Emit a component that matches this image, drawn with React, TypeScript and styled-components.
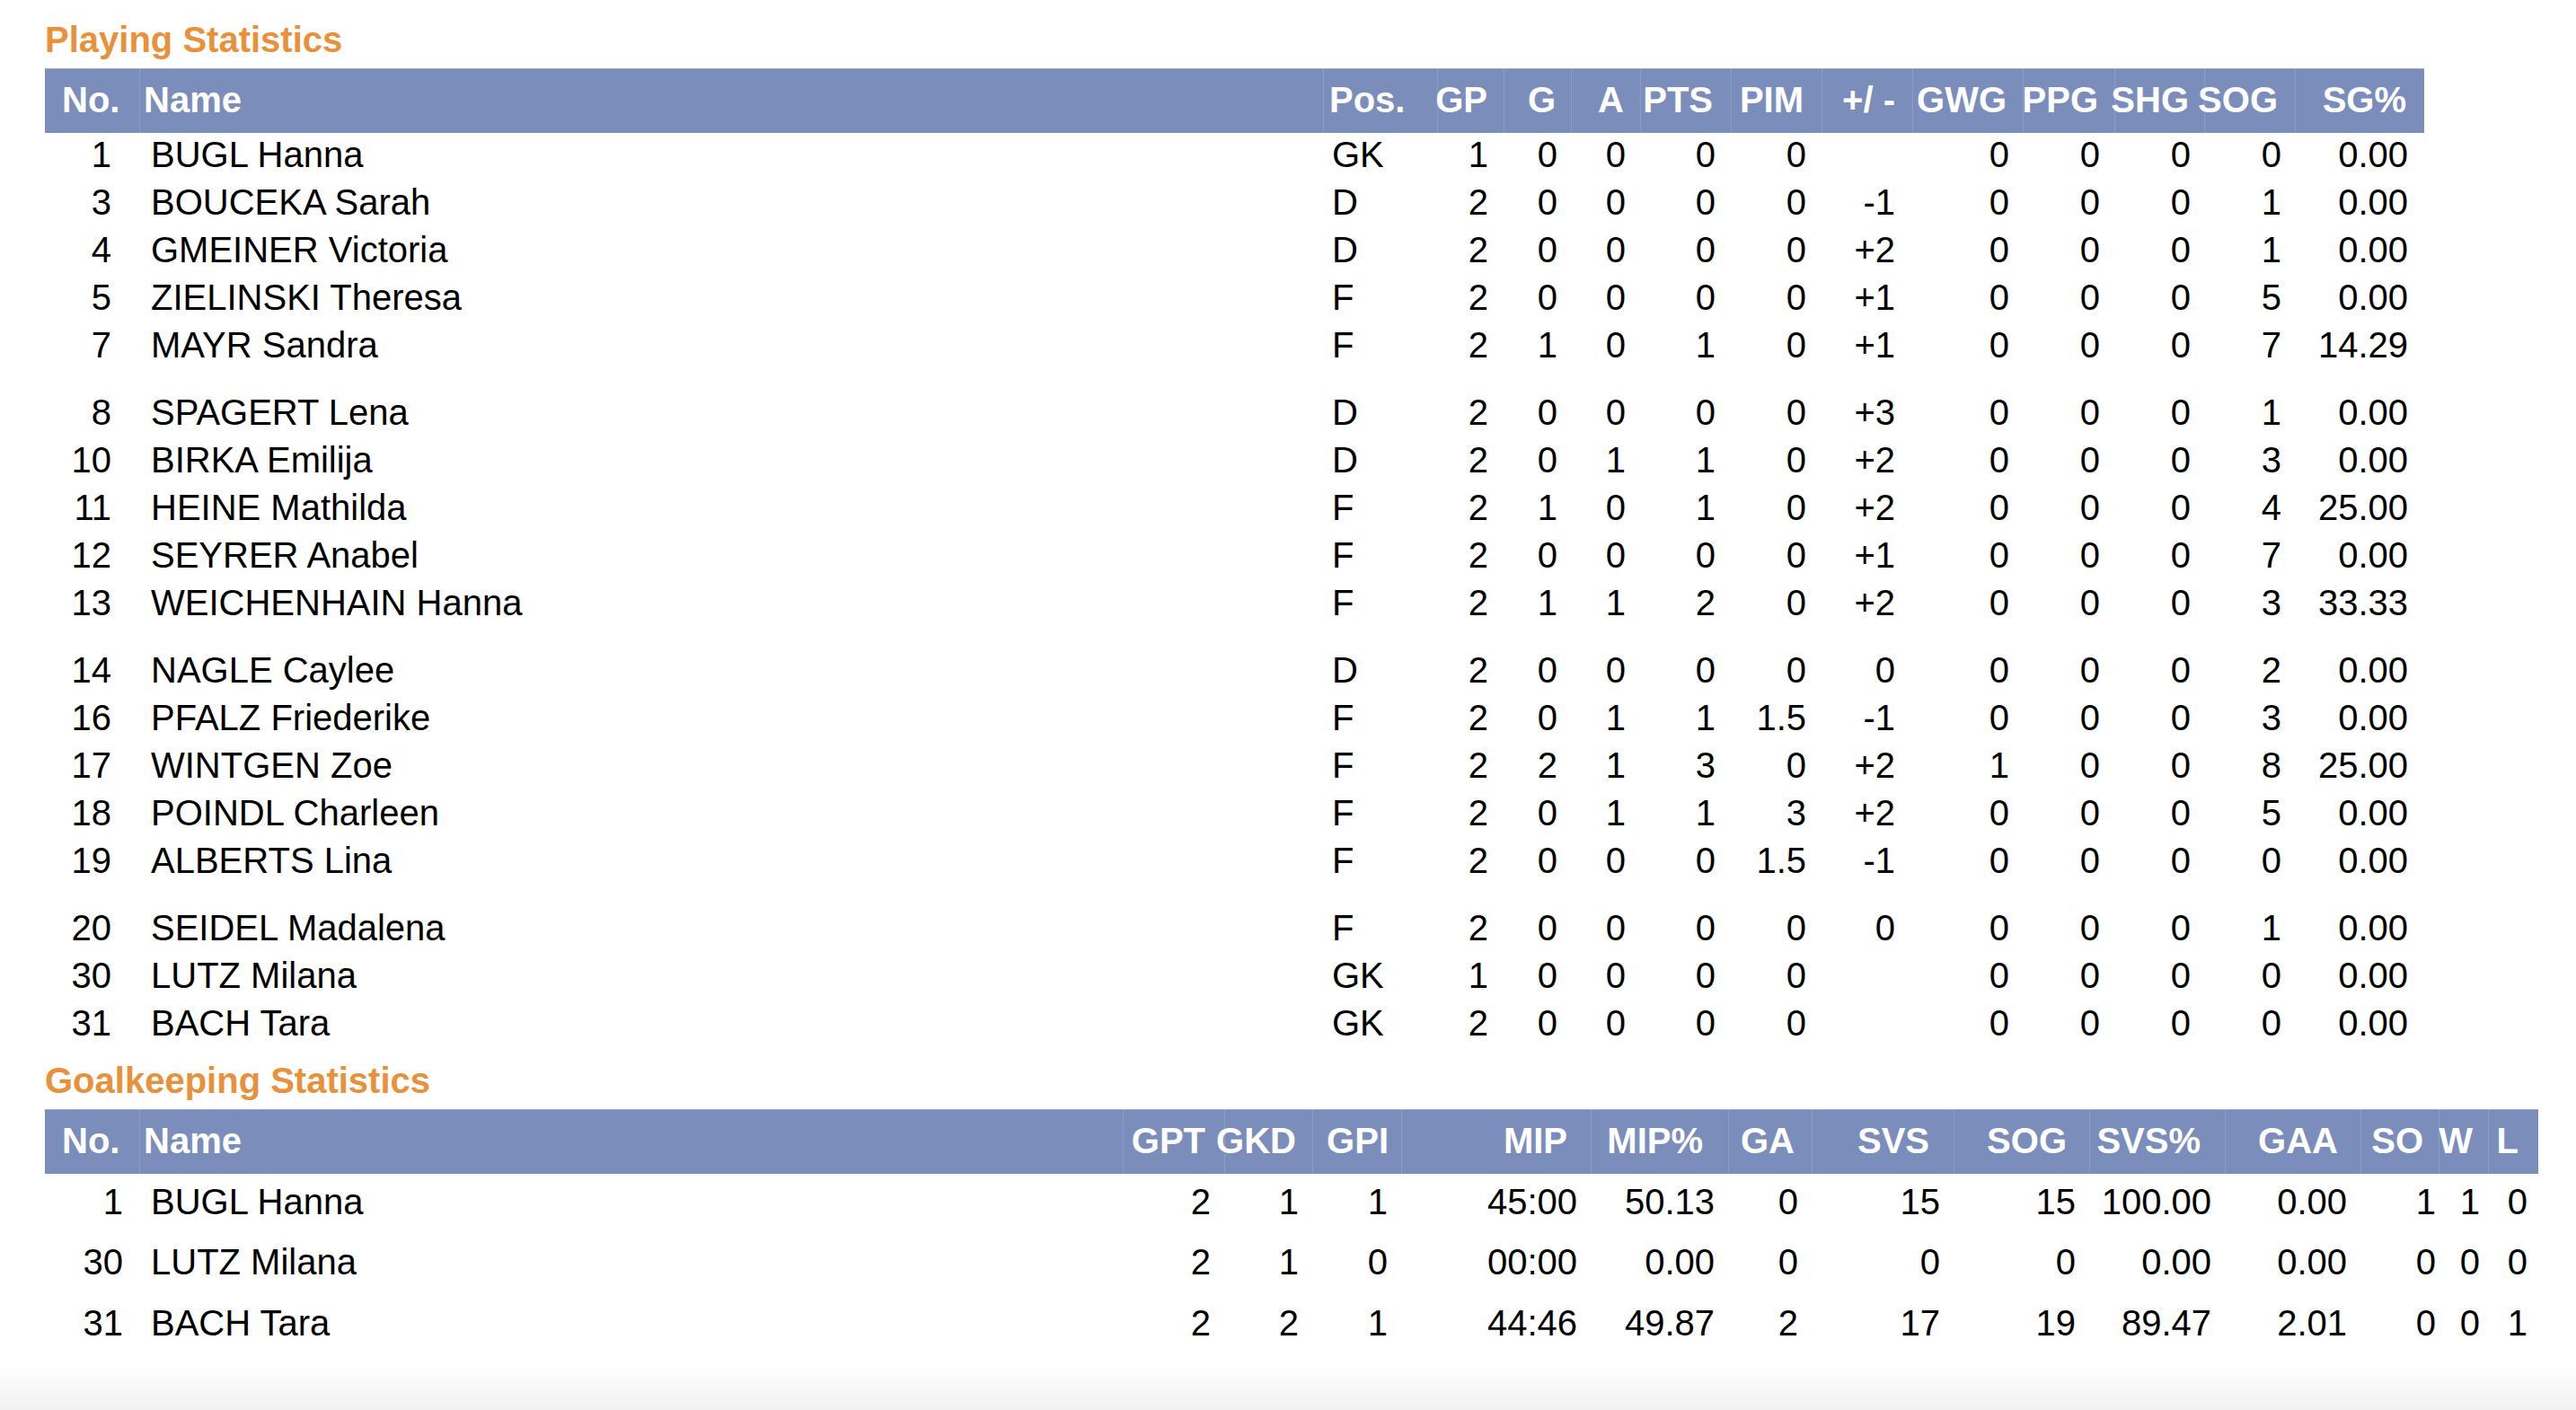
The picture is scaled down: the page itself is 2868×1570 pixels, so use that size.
import styled, { createGlobalStyle } from "styled-components";

type Align = "left" | "right";

interface Column {
  label: string;
  w: number;
  align: Align;
  pad: number; // data padding on aligned side
  hpad: number; // header padding on aligned side
  halign?: Align;
}

const GlobalStyle = createGlobalStyle`
  html {
    height: 100%;
  }
  body {
    margin: 0;
    min-height: 100%;
    font-family: "Liberation Sans", Arial, Helvetica, sans-serif;
    color: #000;
    background: linear-gradient(to bottom, #ffffff calc(100% - 50px), #f1f1f1 100%);
  }
`;

const Page = styled.div`
  padding: 21px 0 0 50px;
`;

const Heading = styled.h2<{ $gap?: number }>`
  margin: ${(p) => p.$gap ?? 0}px 0 9px;
  font-size: 40px;
  line-height: 46px;
  font-weight: 700;
  color: #e8913a;
`;

const Table = styled.div`
  display: flex;
  flex-direction: column;
  width: fit-content;
`;

const Group = styled.div`
  display: flex;
  flex-direction: column;
  & + & {
    margin-top: 22px;
  }
`;

const HeadRow = styled.div<{ $cols: string }>`
  display: grid;
  grid-template-columns: ${(p) => p.$cols};
  height: 72px;
  background: #7b8dbb;
  box-shadow: inset 0 1px 0 rgba(255, 255, 255, 0.25);
`;

const Row = styled.div<{ $cols: string; $h: number }>`
  display: grid;
  grid-template-columns: ${(p) => p.$cols};
  height: ${(p) => p.$h}px;
`;

const Cell = styled.div<{ $align: Align; $pad: number }>`
  display: flex;
  align-items: center;
  justify-content: ${(p) => (p.$align === "right" ? "flex-end" : "flex-start")};
  padding: ${(p) =>
    p.$align === "right" ? `0 ${p.$pad}px 5px 0` : `0 0 5px ${p.$pad}px`};
  font-size: 40px;
  white-space: nowrap;
  min-width: 0;
`;

const HeadCell = styled(Cell)`
  font-weight: 700;
  color: #fff;
  padding-bottom: 1px;
  & + & {
    border-left: 1px solid rgba(255, 255, 255, 0.14);
  }
`;

const playingCols: Column[] = [
  { label: "No.", w: 105, align: "right", pad: 31, hpad: 19, halign: "left" },
  { label: "Name", w: 1318, align: "left", pad: 13, hpad: 4 },
  { label: "Pos.", w: 127, align: "left", pad: 10, hpad: 6 },
  { label: "GP", w: 74, align: "right", pad: 17, hpad: 18 },
  { label: "G", w: 75, align: "right", pad: 15, hpad: 17 },
  { label: "A", w: 77, align: "right", pad: 16, hpad: 18 },
  { label: "PTS", w: 101, align: "right", pad: 17, hpad: 20 },
  { label: "PIM", w: 101, align: "right", pad: 17, hpad: 20 },
  { label: "+/ -", w: 101, align: "right", pad: 19, hpad: 19 },
  { label: "GWG", w: 123, align: "right", pad: 15, hpad: 18 },
  { label: "PPG", w: 102, align: "right", pad: 16, hpad: 18 },
  { label: "SHG", w: 100, align: "right", pad: 15, hpad: 17 },
  { label: "SOG", w: 101, align: "right", pad: 15, hpad: 19 },
  { label: "SG%", w: 144, align: "right", pad: 18, hpad: 20 },
];

const keeperCols: Column[] = [
  { label: "No.", w: 105, align: "right", pad: 18, hpad: 19, halign: "left" },
  { label: "Name", w: 1095, align: "left", pad: 13, hpad: 4 },
  { label: "GPT", w: 113, align: "right", pad: 15, hpad: 21 },
  { label: "GKD", w: 98, align: "right", pad: 15, hpad: 18 },
  { label: "GPI", w: 99, align: "right", pad: 15, hpad: 14 },
  { label: "MIP", w: 211, align: "right", pad: 15, hpad: 26 },
  { label: "MIP%", w: 153, align: "right", pad: 15, hpad: 28 },
  { label: "GA", w: 93, align: "right", pad: 15, hpad: 19 },
  { label: "SVS", w: 158, align: "right", pad: 15, hpad: 27 },
  { label: "SOG", w: 151, align: "right", pad: 15, hpad: 25 },
  { label: "SVS%", w: 151, align: "right", pad: 15, hpad: 27 },
  { label: "GAA", w: 151, align: "right", pad: 15, hpad: 25 },
  { label: "SO", w: 87, align: "right", pad: 3, hpad: 17 },
  { label: "W", w: 55, align: "right", pad: 9, hpad: 17 },
  { label: "L", w: 56, align: "right", pad: 12, hpad: 22 },
];

const players: string[][] = [
  ["1", "BUGL Hanna", "GK", "1", "0", "0", "0", "0", "", "0", "0", "0", "0", "0.00"],
  ["3", "BOUCEKA Sarah", "D", "2", "0", "0", "0", "0", "-1", "0", "0", "0", "1", "0.00"],
  ["4", "GMEINER Victoria", "D", "2", "0", "0", "0", "0", "+2", "0", "0", "0", "1", "0.00"],
  ["5", "ZIELINSKI Theresa", "F", "2", "0", "0", "0", "0", "+1", "0", "0", "0", "5", "0.00"],
  ["7", "MAYR Sandra", "F", "2", "1", "0", "1", "0", "+1", "0", "0", "0", "7", "14.29"],
  ["8", "SPAGERT Lena", "D", "2", "0", "0", "0", "0", "+3", "0", "0", "0", "1", "0.00"],
  ["10", "BIRKA Emilija", "D", "2", "0", "1", "1", "0", "+2", "0", "0", "0", "3", "0.00"],
  ["11", "HEINE Mathilda", "F", "2", "1", "0", "1", "0", "+2", "0", "0", "0", "4", "25.00"],
  ["12", "SEYRER Anabel", "F", "2", "0", "0", "0", "0", "+1", "0", "0", "0", "7", "0.00"],
  ["13", "WEICHENHAIN Hanna", "F", "2", "1", "1", "2", "0", "+2", "0", "0", "0", "3", "33.33"],
  ["14", "NAGLE Caylee", "D", "2", "0", "0", "0", "0", "0", "0", "0", "0", "2", "0.00"],
  ["16", "PFALZ Friederike", "F", "2", "0", "1", "1", "1.5", "-1", "0", "0", "0", "3", "0.00"],
  ["17", "WINTGEN Zoe", "F", "2", "2", "1", "3", "0", "+2", "1", "0", "0", "8", "25.00"],
  ["18", "POINDL Charleen", "F", "2", "0", "1", "1", "3", "+2", "0", "0", "0", "5", "0.00"],
  ["19", "ALBERTS Lina", "F", "2", "0", "0", "0", "1.5", "-1", "0", "0", "0", "0", "0.00"],
  ["20", "SEIDEL Madalena", "F", "2", "0", "0", "0", "0", "0", "0", "0", "0", "1", "0.00"],
  ["30", "LUTZ Milana", "GK", "1", "0", "0", "0", "0", "", "0", "0", "0", "0", "0.00"],
  ["31", "BACH Tara", "GK", "2", "0", "0", "0", "0", "", "0", "0", "0", "0", "0.00"],
];

const keepers: string[][] = [
  ["1", "BUGL Hanna", "2", "1", "1", "45:00", "50.13", "0", "15", "15", "100.00", "0.00", "1", "1", "0"],
  ["30", "LUTZ Milana", "2", "1", "0", "00:00", "0.00", "0", "0", "0", "0.00", "0.00", "0", "0", "0"],
  ["31", "BACH Tara", "2", "2", "1", "44:46", "49.87", "2", "17", "19", "89.47", "2.01", "0", "0", "1"],
];

const chunk = (rows: string[][], size: number) => {
  const out: string[][][] = [];
  for (let i = 0; i < rows.length; i += size) out.push(rows.slice(i, i + size));
  return out;
};

const StatTable = ({
  cols,
  rows,
  rowHeight,
  groupSize,
}: {
  cols: Column[];
  rows: string[][];
  rowHeight: number;
  groupSize: number;
}) => {
  const template = cols.map((c) => `${c.w}px`).join(" ");
  return (
    <Table>
      <HeadRow $cols={template}>
        {cols.map((c) => (
          <HeadCell key={c.label} $align={c.halign ?? c.align} $pad={c.hpad}>
            {c.label}
          </HeadCell>
        ))}
      </HeadRow>
      {chunk(rows, groupSize).map((group, gi) => (
        <Group key={gi}>
          {group.map((r) => (
            <Row key={r[0]} $cols={template} $h={rowHeight}>
              {r.map((v, i) => (
                <Cell key={i} $align={cols[i].align} $pad={cols[i].pad}>
                  {v}
                </Cell>
              ))}
            </Row>
          ))}
        </Group>
      ))}
    </Table>
  );
};

const App = () => {
  return (
    <>
      <GlobalStyle />
      <Page>
        <Heading>Playing Statistics</Heading>
        <StatTable cols={playingCols} rows={players} rowHeight={53} groupSize={5} />
        <Heading $gap={12}>Goalkeeping Statistics</Heading>
        <StatTable cols={keeperCols} rows={keepers} rowHeight={67.5} groupSize={3} />
      </Page>
    </>
  );
};

export default App;
